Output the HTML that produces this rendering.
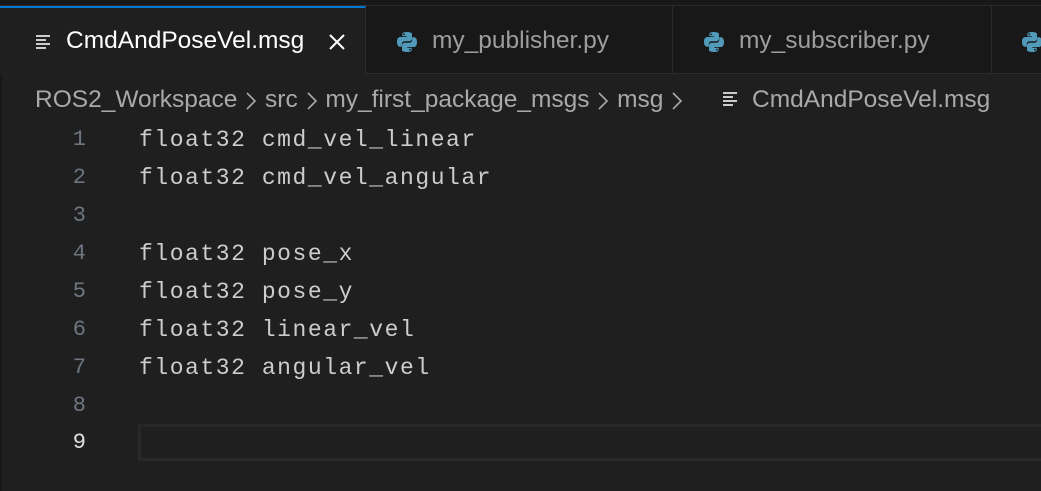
<!DOCTYPE html>
<html><head><meta charset="utf-8"><style>
*{margin:0;padding:0;box-sizing:border-box}
body{width:1041px;height:491px;background:#1f1f1f;overflow:hidden;position:relative;font-family:"Liberation Sans",sans-serif}
.topbar{position:absolute;left:0;top:0;width:1041px;height:6px;background:#181818;border-bottom:1px solid #2b2b2b}
.tabs{position:absolute;left:0;top:6px;width:1041px;height:68px;background:#181818;border-bottom:1px solid #2b2b2b}
.tab{position:absolute;top:0;height:68px;border-right:1px solid #2b2b2b;color:#9d9d9d;font-size:24.5px;line-height:70px;white-space:nowrap;overflow:hidden}
.tab.active{background:#1f1f1f;color:#fff;border-top:2px solid #0078d4;line-height:66px;height:69px}
.py{position:absolute;top:25px}
.crumb{position:absolute;top:84px;left:35px;font-size:24.5px;color:#a9a9a9;white-space:nowrap;line-height:32px}
.ch{display:inline-block;vertical-align:middle;margin:0 1px}
.ln{position:absolute;left:0;width:86px;text-align:right;color:#6e7681;font-family:"Liberation Mono",monospace;font-size:22px;line-height:38px}
.code{position:absolute;left:139px;color:#cccccc;font-family:"Liberation Mono",monospace;font-size:23px;letter-spacing:1.55px;line-height:38px;white-space:pre}
.cur{position:absolute;left:138px;top:424px;width:910px;height:37px;border:3px solid #282828}
.strip{position:absolute;left:0;top:74px;width:2px;height:417px;background:#181818}
</style></head><body>
<div class="topbar"></div>
<div class="tabs">
 <div class="tab active" style="left:0;width:366px">
  <svg style="position:absolute;left:36px;top:26px" width="18" height="16" viewBox="0 0 18 16"><g fill="#cccccc"><rect x="0" y="1" width="14" height="2"/><rect x="0" y="5" width="10" height="2"/><rect x="0" y="9" width="14" height="2"/><rect x="0" y="13" width="10" height="2"/></g></svg>
  <span style="position:absolute;left:66px">CmdAndPoseVel.msg</span>
  <svg style="position:absolute;left:328px;top:25px" width="18" height="18" viewBox="0 0 18 18"><path d="M2 2L16 16M16 2L2 16" stroke="#fff" stroke-width="2"/></svg>
 </div>
 <div class="tab" style="left:366px;width:307px">
  <svg class="py" style="left:30px" width="22" height="22" viewBox="0 0 22 22"><path fill="#519aba" d="M10.5 1C6 1 6.3 3 6.3 3v2.2h4.4V6H4.4S1 5.6 1 10.8c0 5.2 3 5 3 5h1.8v-2.5s-.1-3 3-3h4.3s2.9 0 2.9-2.8V3S16.4 1 10.5 1zM8 2.4a.9.9 0 110 1.8.9.9 0 010-1.8z"/><path fill="#519aba" d="M11.5 21c4.5 0 4.2-2 4.2-2v-2.2h-4.4V16h6.3s3.4.4 3.4-4.8-3-5-3-5h-1.8v2.5s.1 3-3 3H8.9s-2.9 0-2.9 2.8V19S5.6 21 11.5 21zm2.5-1.4a.9.9 0 110-1.8.9.9 0 010 1.8z"/></svg>
  <span style="position:absolute;left:66px">my_publisher.py</span>
 </div>
 <div class="tab" style="left:673px;width:319px">
  <svg class="py" style="left:30px" width="22" height="22" viewBox="0 0 22 22"><path fill="#519aba" d="M10.5 1C6 1 6.3 3 6.3 3v2.2h4.4V6H4.4S1 5.6 1 10.8c0 5.2 3 5 3 5h1.8v-2.5s-.1-3 3-3h4.3s2.9 0 2.9-2.8V3S16.4 1 10.5 1zM8 2.4a.9.9 0 110 1.8.9.9 0 010-1.8z"/><path fill="#519aba" d="M11.5 21c4.5 0 4.2-2 4.2-2v-2.2h-4.4V16h6.3s3.4.4 3.4-4.8-3-5-3-5h-1.8v2.5s.1 3-3 3H8.9s-2.9 0-2.9 2.8V19S5.6 21 11.5 21zm2.5-1.4a.9.9 0 110-1.8.9.9 0 010 1.8z"/></svg>
  <span style="position:absolute;left:66px">my_subscriber.py</span>
 </div>
 <div class="tab" style="left:992px;width:60px">
  <svg class="py" style="left:29px" width="22" height="22" viewBox="0 0 22 22"><path fill="#519aba" d="M10.5 1C6 1 6.3 3 6.3 3v2.2h4.4V6H4.4S1 5.6 1 10.8c0 5.2 3 5 3 5h1.8v-2.5s-.1-3 3-3h4.3s2.9 0 2.9-2.8V3S16.4 1 10.5 1zM8 2.4a.9.9 0 110 1.8.9.9 0 010-1.8z"/><path fill="#519aba" d="M11.5 21c4.5 0 4.2-2 4.2-2v-2.2h-4.4V16h6.3s3.4.4 3.4-4.8-3-5-3-5h-1.8v2.5s.1 3-3 3H8.9s-2.9 0-2.9 2.8V19S5.6 21 11.5 21zm2.5-1.4a.9.9 0 110-1.8.9.9 0 010 1.8z"/></svg>
 </div>
</div>
<div class="crumb">ROS2_Workspace <svg class="ch" width="12" height="20" viewBox="0 0 12 20"><path d="M2 2L10 10L2 18" stroke="#a9a9a9" stroke-width="1.6" fill="none"/></svg> src <svg class="ch" width="12" height="20" viewBox="0 0 12 20"><path d="M2 2L10 10L2 18" stroke="#a9a9a9" stroke-width="1.6" fill="none"/></svg> my_first_package_msgs <svg class="ch" width="12" height="20" viewBox="0 0 12 20"><path d="M2 2L10 10L2 18" stroke="#a9a9a9" stroke-width="1.6" fill="none"/></svg> msg <svg class="ch" width="12" height="20" viewBox="0 0 12 20"><path d="M2 2L10 10L2 18" stroke="#a9a9a9" stroke-width="1.6" fill="none"/></svg></div>
<svg style="position:absolute;left:723px;top:91px" width="16" height="16" viewBox="0 0 16 16"><g fill="#cccccc"><rect x="0" y="1" width="14" height="2"/><rect x="0" y="5" width="10" height="2"/><rect x="0" y="9" width="14" height="2"/><rect x="0" y="13" width="10" height="2"/></g></svg>
<div class="crumb" style="left:752px">CmdAndPoseVel.msg</div>
<div class="strip"></div>
<div class="cur"></div>
<div class="ln" style="top:121px">1</div>
<div class="ln" style="top:159px">2</div>
<div class="ln" style="top:197px">3</div>
<div class="ln" style="top:235px">4</div>
<div class="ln" style="top:273px">5</div>
<div class="ln" style="top:311px">6</div>
<div class="ln" style="top:349px">7</div>
<div class="ln" style="top:387px">8</div>
<div class="ln" style="top:424px;color:#e0e0e0">9</div>
<div class="code" style="top:121px">float32 cmd_vel_linear</div>
<div class="code" style="top:159px">float32 cmd_vel_angular</div>
<div class="code" style="top:235px">float32 pose_x</div>
<div class="code" style="top:273px">float32 pose_y</div>
<div class="code" style="top:311px">float32 linear_vel</div>
<div class="code" style="top:349px">float32 angular_vel</div>
</body></html>
